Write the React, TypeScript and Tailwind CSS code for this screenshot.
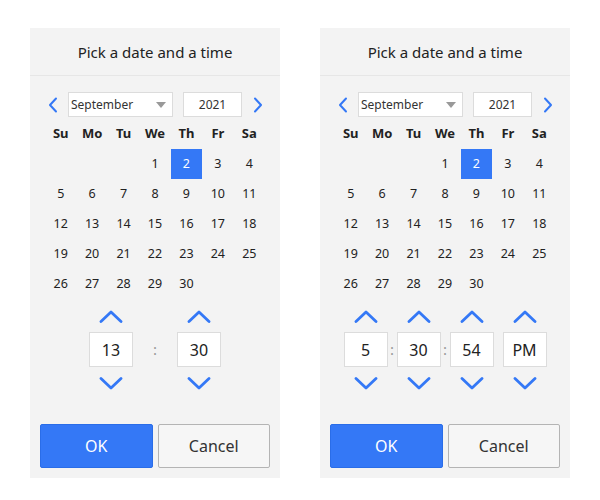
import type { ReactNode } from 'react'

const WEEKDAYS = ['Su', 'Mo', 'Tu', 'We', 'Th', 'Fr', 'Sa']

// wrzesień 2021 zaczyna się w środę
const DAYS: (number | null)[] = [
  null, null, null,
  ...Array.from({ length: 30 }, (_, i) => i + 1),
  null, null,
]

type Part = { value: string; sep?: string }

function Chevron({ dir }: { dir: 'up' | 'down' }) {
  return (
    <svg width="24" height="13" viewBox="0 0 24 13" fill="none">
      <path
        d={dir === 'up' ? 'M2 11.5 L12 2 L22 11.5' : 'M2 1.5 L12 11 L22 1.5'}
        stroke="#3478f6"
        strokeWidth="2.8"
        strokeLinecap="round"
        strokeLinejoin="round"
      />
    </svg>
  )
}

function NavArrow({ dir }: { dir: 'left' | 'right' }) {
  return (
    <button type="button" className="flex h-[25px] w-[15px] items-center justify-center">
      <svg width="10" height="16" viewBox="0 0 10 16" fill="none">
        <path
          d={dir === 'left' ? 'M8 1.5 L2 8 L8 14.5' : 'M2 1.5 L8 8 L2 14.5'}
          stroke="#3478f6"
          strokeWidth="2"
          strokeLinecap="round"
          strokeLinejoin="round"
        />
      </svg>
    </button>
  )
}

function Spinner({ value }: { value: string }) {
  return (
    <div className="flex w-[44px] flex-col items-center">
      <button type="button" className="flex h-[26px] w-full items-center justify-center">
        <Chevron dir="up" />
      </button>
      <div className="mt-[3px] flex h-[35px] w-[44px] items-center justify-center border border-[#dcdcdc] bg-white text-[16px] text-[#222]">
        {value}
      </div>
      <button type="button" className="mt-[3px] flex h-[26px] w-full items-center justify-center">
        <Chevron dir="down" />
      </button>
    </div>
  )
}

function Separator({ text, wide }: { text?: string; wide?: boolean }) {
  return (
    <div
      className={[
        'mt-[29px] flex h-[35px] items-center justify-center text-[15px] text-[#999]',
        wide ? 'w-[44px]' : 'w-[9px]',
      ].join(' ')}
    >
      {text}
    </div>
  )
}

function Picker({ time }: { time: ReactNode }) {
  return (
    <div className="flex h-[450px] w-[250px] flex-col bg-[#f3f3f3] text-[#222]">
      <div className="flex h-[48px] items-center justify-center border-b border-[#e6e6e6] pt-[1px] text-[15px]">
        Pick a date and a time
      </div>

      <div className="px-[15px] pt-[16px]">
        <div className="flex h-[25px] items-center gap-[8px]">
          <NavArrow dir="left" />
          <div className="relative flex h-[25px] w-[105px] items-center border border-[#dcdcdc] bg-white pl-[2px] text-[12px] text-[#333]">
            September
            <span className="absolute right-[6px] top-[9px] h-0 w-0 border-x-[5px] border-t-[6px] border-x-transparent border-t-[#999]" />
          </div>
          <div className="ml-[2px] flex h-[25px] w-[59px] items-center justify-center border border-[#dcdcdc] bg-white text-[12px] text-[#333]">
            2021
          </div>
          <NavArrow dir="right" />
        </div>

        <div className="mt-[2px] grid grid-cols-7">
          {WEEKDAYS.map((d) => (
            <div key={d} className="flex h-[30px] items-center justify-center text-[13px] font-bold text-[#222]">
              {d}
            </div>
          ))}
          {DAYS.map((d, i) => (
            <div
              key={i}
              className={[
                'flex h-[30px] items-center justify-center text-[12.5px]',
                d === 2 ? 'bg-[#3478f6] text-white' : 'text-[#222]',
              ].join(' ')}
            >
              {d}
            </div>
          ))}
        </div>
      </div>

      <div className="flex justify-center pt-[4px]">{time}</div>

      <div className="mt-auto flex gap-[5px] px-[10px] pb-[10px]">
        <button
          type="button"
          className="h-[44px] flex-1 rounded-[2px] border border-[#2a6de8] bg-[#3478f6] text-[16px] text-white"
        >
          OK
        </button>
        <button
          type="button"
          className="h-[44px] flex-1 rounded-[2px] border border-[#b4b4b4] bg-[#f6f6f6] text-[16px] text-[#333]"
        >
          Cancel
        </button>
      </div>
    </div>
  )
}

function TimeParts({ parts, wideSep }: { parts: Part[]; wideSep?: boolean }) {
  return (
    <div className="flex">
      {parts.map((p, i) => (
        <div key={i} className="flex">
          <Spinner value={p.value} />
          {i < parts.length - 1 && <Separator text={p.sep} wide={wideSep} />}
        </div>
      ))}
    </div>
  )
}

export default function App() {
  return (
    <div className="flex h-[500px] w-[600px] gap-[40px] bg-white pl-[30px] pt-[28px] font-['Noto_Sans',sans-serif]">
      <Picker
        time={<TimeParts wideSep parts={[{ value: '13', sep: ':' }, { value: '30' }]} />}
      />
      <Picker
        time={
          <TimeParts
            parts={[
              { value: '5', sep: ':' },
              { value: '30', sep: ':' },
              { value: '54' },
              { value: 'PM' },
            ]}
          />
        }
      />
    </div>
  )
}
